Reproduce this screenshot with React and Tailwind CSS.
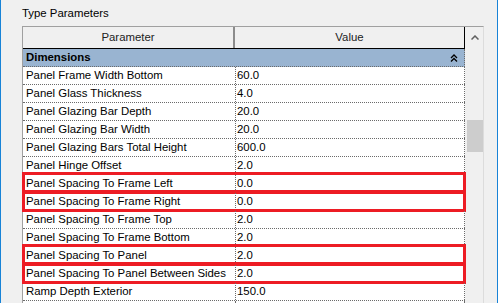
import React from "react";

const rows = [
  { name: "Panel Frame Width Bottom", value: "60.0" },
  { name: "Panel Glass Thickness", value: "4.0" },
  { name: "Panel Glazing Bar Depth", value: "20.0" },
  { name: "Panel Glazing Bar Width", value: "20.0" },
  { name: "Panel Glazing Bars Total Height", value: "600.0" },
  { name: "Panel Hinge Offset", value: "2.0" },
  { name: "Panel Spacing To Frame Left", value: "0.0", marked: true },
  { name: "Panel Spacing To Frame Right", value: "0.0", marked: true },
  { name: "Panel Spacing To Frame Top", value: "2.0" },
  { name: "Panel Spacing To Frame Bottom", value: "2.0" },
  { name: "Panel Spacing To Panel", value: "2.0", marked: true },
  { name: "Panel Spacing To Panel Between Sides", value: "2.0", marked: true },
  { name: "Ramp Depth Exterior", value: "150.0" },
];

const CollapseIcon = () => (
  <svg width="8" height="8" viewBox="0 0 8 8" className="block">
    <path d="M1 4 L4 1 L7 4" fill="none" stroke="#000" strokeWidth="1.3" />
    <path d="M1 7.5 L4 4.5 L7 7.5" fill="none" stroke="#000" strokeWidth="1.3" />
  </svg>
);

const ParamRow = ({ row }) => (
  <div className="relative flex h-[18px] border-b border-dotted border-[#6b6b6b]">
    <div className="w-[213px] shrink-0 border-r border-dotted border-[#6b6b6b] pl-[3px] leading-[17px] whitespace-nowrap overflow-hidden">
      {row.name}
    </div>
    <div className="flex-1 pl-[1px] leading-[17px] border-r border-dotted border-[#6b6b6b]">
      {row.value}
    </div>
    {/* annotation box drawn over the row */}
    {row.marked && (
      <div className="absolute -left-[1px] -right-[1px] -top-[3px] -bottom-[2px] border-[3px] border-[#ed1c24] pointer-events-none" />
    )}
  </div>
);

export default function App() {
  return (
    <div
      className="w-[498px] h-[303px] overflow-hidden bg-[#f0f0f0] border-x border-[#1883d7] flex flex-col text-black text-[11.4px]"
      style={{ fontFamily: '"Liberation Sans", Arial, sans-serif' }}
    >
      <div className="h-[26px] shrink-0 pl-[21px] pt-[5px] leading-[16px]">Type Parameters</div>

      <div className="ml-[21px] w-[462px] flex-1 flex border-t border-l border-[#a0a0a0] border-r border-r-[#dcdcdc] min-h-0">
        {/* grid */}
        <div className="w-[442px] shrink-0 bg-white flex flex-col">
          <div className="flex h-[22px] shrink-0 bg-[#f0f0f0] border-b border-black text-[#222]">
            <div className="w-[212px] shrink-0 border-r-2 border-[#8c8c8c] flex items-center justify-center">Parameter</div>
            <div className="flex-1 border-r border-black flex items-center justify-center">Value</div>
          </div>
          <div className="flex h-[18px] shrink-0 bg-[#99b4d1] border-b border-r border-dotted border-[#6b6b6b] items-center pl-[3px] pr-[6px]">
            <span className="flex-1 font-bold leading-[17px]">Dimensions</span>
            <CollapseIcon />
          </div>
          {rows.map((row) => (
            <ParamRow key={row.name} row={row} />
          ))}
          <div className="flex-1 flex">
            <div className="w-[213px] shrink-0 border-r border-dotted border-[#6b6b6b]" />
            <div className="flex-1 border-r border-dotted border-[#6b6b6b]" />
          </div>
        </div>

        {/* vertical scrollbar */}
        <div className="w-[18px] shrink-0 bg-[#f0f0f0] flex flex-col items-start pl-[2px]">
          <div className="h-[20px] w-[16px] flex items-center justify-center pt-[1px]">
            <svg width="8" height="5" viewBox="0 0 8 5" className="block">
              <path d="M0.5 4.5 L4 1 L7.5 4.5" fill="none" stroke="#606060" strokeWidth="1.5" />
            </svg>
          </div>
          <div className="mt-[73px] h-[32px] w-[16px] bg-[#cdcdcd]" />
        </div>
      </div>
    </div>
  );
}
